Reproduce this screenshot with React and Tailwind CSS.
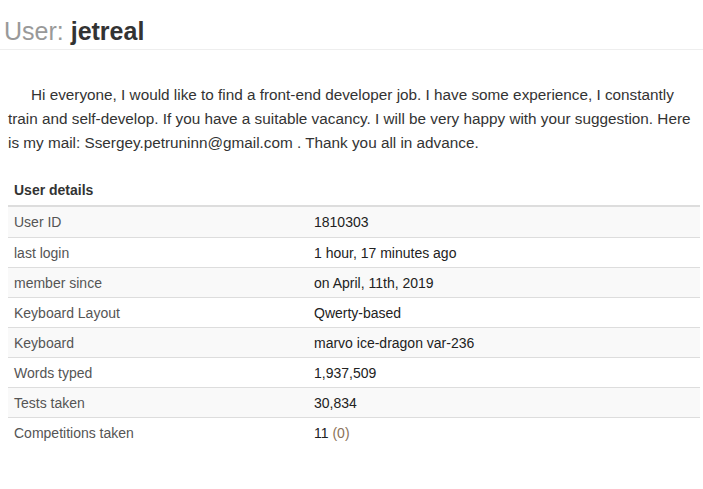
const details = [
  { label: 'User ID', value: '1810303' },
  { label: 'last login', value: '1 hour, 17 minutes ago' },
  { label: 'member since', value: 'on April, 11th, 2019' },
  { label: 'Keyboard Layout', value: 'Qwerty-based' },
  { label: 'Keyboard', value: 'marvo ice-dragon var-236' },
  { label: 'Words typed', value: '1,937,509' },
  { label: 'Tests taken', value: '30,834' },
  { label: 'Competitions taken', value: '11', extra: '(0)' },
]

export default function App() {
  return (
    <div className="min-h-[489px] bg-white text-[#333] font-['Liberation_Sans',Arial,sans-serif]">
      <div className="border-b border-[#eee] pt-[17px] pb-[4px] px-[4px]">
        <h1 className="text-[25px] leading-[28px]">
          <span className="text-[#999]">User: </span>
          <span className="font-bold text-[#333]">jetreal</span>
        </h1>
      </div>

      <p className="mt-[33px] pl-[8px] pr-[6px] text-[15.3px] leading-[24px] indent-[23px] text-[#333]">
        Hi everyone, I would like to find a front-end developer job. I have some experience, I constantly train and self-develop. If you have a suitable vacancy. I will be very happy with your suggestion. Here is my mail: Ssergey.petruninn@gmail.com . Thank you all in advance.
      </p>

      <div className="mt-[20px] mx-[8px] w-[692px] text-[14px] leading-[20px]">
        <div className="px-[6px] py-[5px] border-b-2 border-[#ddd] font-bold text-[#333]">User details</div>
        {details.map((row, i) => (
          <div
            key={row.label}
            className={`grid grid-cols-[301px_1fr] h-[30px] items-center ${i === 0 ? 'h-[29px]' : 'border-t border-[#ddd]'} ${i % 2 === 0 ? 'bg-[#f9f9f9]' : 'bg-white'}`}
          >
            <div className="px-[6px] text-[#555]">{row.label}</div>
            <div className="px-[5px] text-[#222]">
              {row.value}
              {row.extra && <span className="text-[#8a7257]"> {row.extra}</span>}
            </div>
          </div>
        ))}
      </div>
    </div>
  )
}
